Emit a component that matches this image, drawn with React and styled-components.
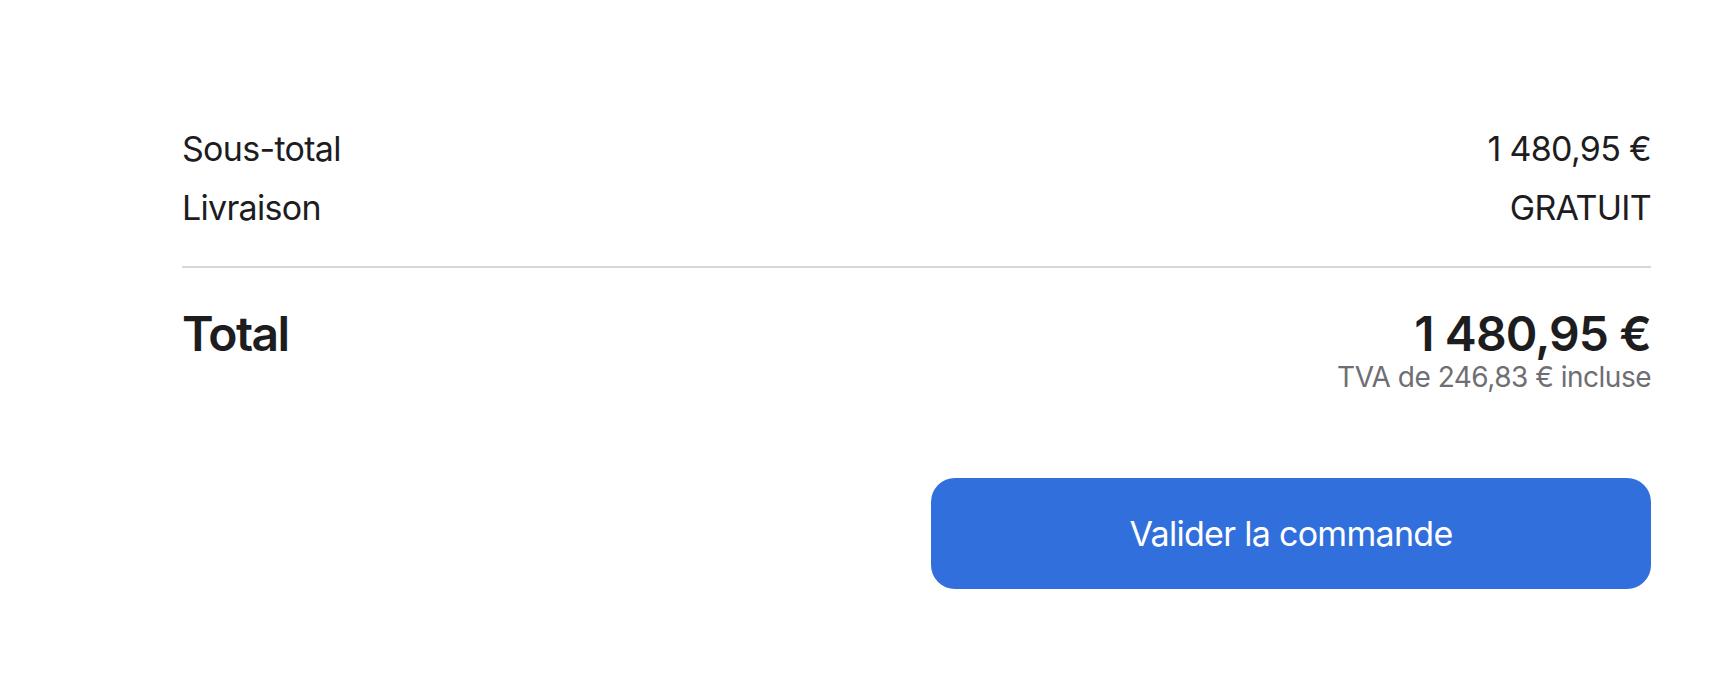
import styled, { createGlobalStyle } from "styled-components"

const GlobalStyle = createGlobalStyle`
  body {
    margin: 0;
    background: #fff;
    font-family: Inter, "Noto Sans", sans-serif;
    color: #1d1d1f;
  }
`

const Summary = styled.section`
  padding: 128px 85px 0 182px;
`

const Lines = styled.div`
  display: flex;
  flex-direction: column;
  gap: 17px;
  padding-bottom: 37px;
  border-bottom: 2px solid #d6d6db;
`

const Line = styled.div`
  display: flex;
  justify-content: space-between;
  font-size: 34px;
  line-height: 42px;
  letter-spacing: -0.7px;
`

const TotalRow = styled.div`
  display: flex;
  justify-content: space-between;
  align-items: flex-start;
  margin-top: 39px;
`

const TotalLabel = styled.div`
  font-size: 48px;
  line-height: 53px;
  font-weight: 600;
  letter-spacing: -1.6px;
`

const TotalAmount = styled.div`
  display: flex;
  flex-direction: column;
  align-items: flex-end;

  strong {
    font-size: 48px;
    line-height: 53px;
    font-weight: 600;
    letter-spacing: -0.9px;
  }

  span {
    font-size: 28px;
    line-height: 34px;
    color: #6e6e73;
    letter-spacing: -0.5px;
  }
`

const Actions = styled.div`
  display: flex;
  justify-content: flex-end;
  margin-top: 84px;
`

const CheckoutButton = styled.button`
  width: 720px;
  height: 111px;
  border: none;
  border-radius: 24px;
  background: #3170dc;
  color: #fff;
  font-family: Inter, "Noto Sans", sans-serif;
  font-size: 34px;
  letter-spacing: -0.7px;
  cursor: pointer;
`

export default function App() {
  return (
    <>
      <GlobalStyle />
      <Summary>
        <Lines>
          <Line>
            <span>Sous-total</span>
            <span>1 480,95 €</span>
          </Line>
          <Line>
            <span>Livraison</span>
            <span>GRATUIT</span>
          </Line>
        </Lines>
        <TotalRow>
          <TotalLabel>Total</TotalLabel>
          <TotalAmount>
            <strong>1 480,95 €</strong>
            <span>TVA de 246,83 € incluse</span>
          </TotalAmount>
        </TotalRow>
        <Actions>
          <CheckoutButton>Valider la commande</CheckoutButton>
        </Actions>
      </Summary>
    </>
  )
}
